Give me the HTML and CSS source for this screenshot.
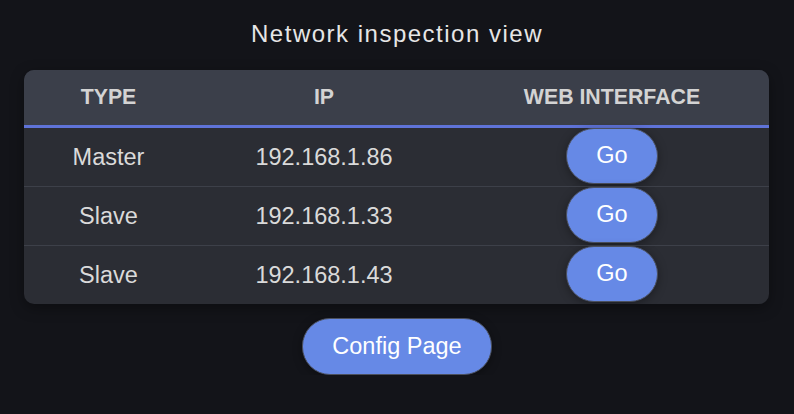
FILE: index.html
```html
<!DOCTYPE html>
<html lang="en">
<head>
<meta charset="utf-8">
<title>Network inspection view</title>
<link rel="stylesheet" href="styles.css">
</head>
<body>
<main class="page">
  <h1 class="title">Network inspection view</h1>
  <div class="card">
    <table class="net">
      <colgroup>
        <col class="c-type">
        <col class="c-ip">
        <col class="c-web">
      </colgroup>
      <thead>
        <tr><th>TYPE</th><th>IP</th><th>WEB INTERFACE</th></tr>
      </thead>
      <tbody>
        <tr><td>Master</td><td>192.168.1.86</td><td><button class="btn">Go</button></td></tr>
        <tr><td>Slave</td><td>192.168.1.33</td><td><button class="btn">Go</button></td></tr>
        <tr><td>Slave</td><td>192.168.1.43</td><td><button class="btn">Go</button></td></tr>
      </tbody>
    </table>
  </div>
  <button class="btn config">Config Page</button>
</main>
</body>
</html>
```

FILE: styles.css
```css
html, body {
  margin: 0;
  background: #131419;
  font-family: "Liberation Sans", Arial, Helvetica, sans-serif;
}

.page {
  display: flex;
  flex-direction: column;
  align-items: center;
  padding: 20px 0 0 0;
}

.title {
  margin: 0 0 22px;
  font-size: 24px;
  line-height: 28px;
  font-weight: normal;
  letter-spacing: 1.5px;
  color: #e6e6e6;
}

.card {
  width: 745px;
  margin-left: -1px;
  border-radius: 10px;
  overflow: hidden;
  background: #2b2d34;
  box-shadow: 0 4px 14px rgba(0, 0, 0, 0.35);
}

.net {
  width: 100%;
  border-collapse: separate;
  border-spacing: 0;
  table-layout: fixed;
}

.c-type { width: 169px; }
.c-ip { width: 262px; }

.net th {
  height: 55px;
  padding: 0;
  background: #3b3f4a;
  border-bottom: 3px solid #5f73d8;
  color: #d3d3d3;
  font-size: 21.3px;
  font-weight: bold;
  text-align: center;
}

.net td {
  height: 58px;
  padding: 0;
  text-align: center;
  vertical-align: middle;
  color: #dadada;
  font-size: 23.5px;
}

.net tbody tr + tr td {
  height: 58px;
  border-top: 1px solid #3d4049;
}

.btn {
  box-sizing: border-box;
  height: 56px;
  padding: 0 29px;
  border: 1.5px solid #4b505e;
  border-radius: 28px;
  background: #6689e6;
  color: #ffffff;
  font-family: "Liberation Sans", Arial, Helvetica, sans-serif;
  font-size: 23.5px;
  line-height: 1;
  box-shadow: 0 2px 10px rgba(0, 0, 0, 0.35);
  cursor: pointer;
}

.net .btn {
  display: block;
  margin: -1px auto 1px;
}

.config {
  margin-top: 14px;
  height: 57px;
}
```
